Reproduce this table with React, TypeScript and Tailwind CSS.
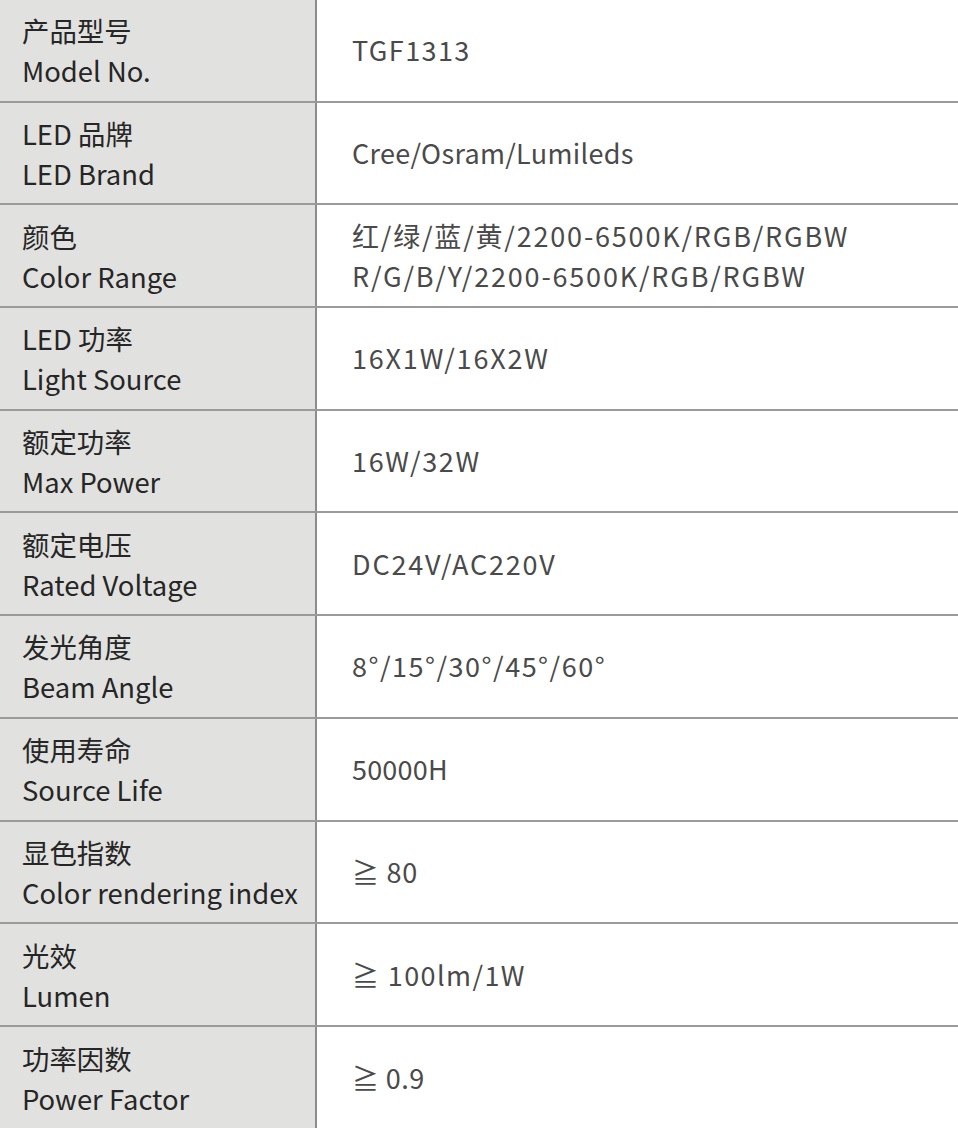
const ROWS: { zh: string; en: string; value: string[]; track: string }[] = [
  { zh: '产品型号', en: 'Model No.', value: ['TGF1313'], track: 'tracking-[1.4px]' },
  { zh: 'LED 品牌', en: 'LED Brand', value: ['Cree/Osram/Lumileds'], track: 'tracking-[0.3px]' },
  {
    zh: '颜色',
    en: 'Color Range',
    value: ['红/绿/蓝/黄/2200-6500K/RGB/RGBW', 'R/G/B/Y/2200-6500K/RGB/RGBW'],
    track: 'tracking-[1.8px]',
  },
  { zh: 'LED 功率', en: 'Light Source', value: ['16X1W/16X2W'], track: 'tracking-[1.8px]' },
  { zh: '额定功率', en: 'Max Power', value: ['16W/32W'], track: 'tracking-[1.7px]' },
  { zh: '额定电压', en: 'Rated Voltage', value: ['DC24V/AC220V'], track: 'tracking-[1.8px]' },
  { zh: '发光角度', en: 'Beam Angle', value: ['8°/15°/30°/45°/60°'], track: 'tracking-[1.5px]' },
  { zh: '使用寿命', en: 'Source Life', value: ['50000H'], track: 'tracking-[0.2px]' },
  { zh: '显色指数', en: 'Color rendering index', value: ['≧ 80'], track: 'tracking-[0.7px]' },
  { zh: '光效', en: 'Lumen', value: ['≧ 100lm/1W'], track: 'tracking-[1.4px]' },
  { zh: '功率因数', en: 'Power Factor', value: ['≧ 0.9'], track: 'tracking-[0.4px]' },
];

export default function App() {
  return (
    <div
      className="w-[958px] h-[1128px] overflow-hidden bg-white"
      style={{ fontFamily: '"Noto Sans CJK SC", "Noto Sans", sans-serif' }}
    >
      {ROWS.map((row, i) => (
        <div
          key={i}
          className={`flex h-[102.7px] ${i < ROWS.length - 1 ? 'border-b-2' : ''} border-[#9a9a9a]`}
        >
          {/* label: zh over en */}
          <div className="flex w-[317px] shrink-0 flex-col justify-center border-r-2 border-[#8c8c8c] bg-[#e1e1df] pl-[22px] text-[27.4px] leading-[40px] text-[#262626]">
            <span>{row.zh}</span>
            <span>{row.en}</span>
          </div>
          <div
            className={`flex flex-1 flex-col justify-center pl-[35px] text-[27px] leading-[40px] text-[#4a4a4a] ${row.track}`}
          >
            {row.value.map((v, j) => (
              <span key={j}>{v}</span>
            ))}
          </div>
        </div>
      ))}
    </div>
  );
}
